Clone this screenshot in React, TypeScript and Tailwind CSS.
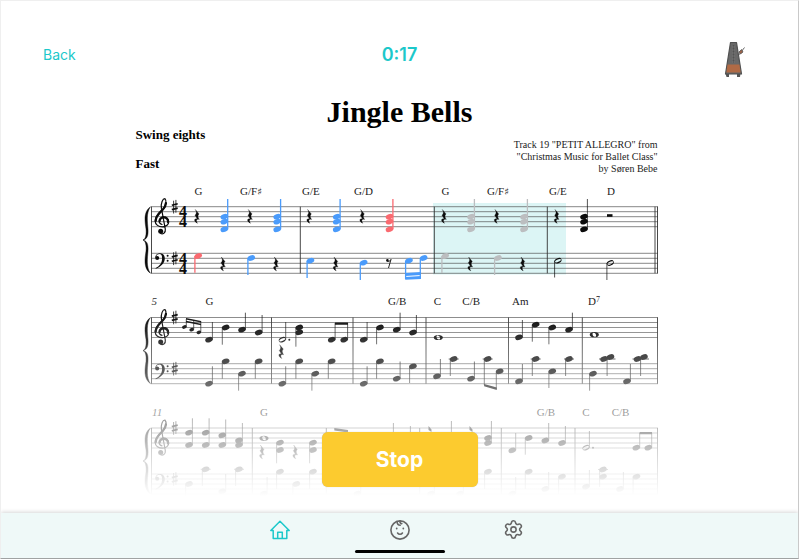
import { useState } from "react";
import { Settings } from "lucide-react";

const INK = "#0b0b0b";
const BLUE = "#4a9bfb";
const RED = "#fa6a70";
const MUTED = "#bcbec0";

type Note = {
  x: number;
  y: number[];
  to?: number;
  dir?: "up" | "down";
  color?: string;
  kind?: "half" | "whole" | "grace";
  dot?: boolean;
  ledger?: boolean;
};

function Head({ x, y, color, kind }: { x: number; y: number; color: string; kind?: Note["kind"] }) {
  if (kind === "whole") {
    return (
      <g transform={`translate(${x} ${y})`}>
        <path
          fillRule="evenodd"
          fill={color}
          d="M-4.600 0C-4.600-1.700-2.600-2.600 0-2.600S4.600-1.700 4.600 0 2.600 2.600 0 2.600-4.600 1.700-4.600 0ZM-1.800-.7C-1.800.8-.7 2 .5 2 1.500 2 1.800 1.400 1.800.7 1.800-.8.7-2-.5-2-1.500-2-1.800-1.400-1.800-.7Z"
        />
      </g>
    );
  }
  if (kind === "half") {
    return (
      <g transform={`translate(${x} ${y}) rotate(-24)`}>
        <path
          fillRule="evenodd"
          fill={color}
          d="M-3.700 0A3.700 2.500 0 1 0 3.700 0 3.700 2.500 0 1 0-3.700 0ZM-3.100.2A3.100 1.200 0 1 0 3.100-.2 3.100 1.200 0 1 0-3.100.2Z"
        />
      </g>
    );
  }
  const r = kind === "grace" ? [2.4, 1.7] : [3.9, 2.6];
  return <ellipse cx={x} cy={y} rx={r[0]} ry={r[1]} fill={color} transform={`rotate(-20 ${x} ${y})`} />;
}

function Notes({ items }: { items: Note[] }) {
  return (
    <>
      {items.map((n, i) => {
        const color = n.color ?? INK;
        const reach = n.kind === "grace" ? 2 : 3.4;
        const sx = n.dir === "down" ? n.x - reach : n.x + reach;
        const from = n.dir === "down" ? Math.min(...n.y) : Math.max(...n.y);
        return (
          <g key={i}>
            {n.to !== undefined && (
              <line x1={sx} x2={sx} y1={from} y2={n.to} stroke={color} strokeWidth={n.color ? 1.3 : 0.7} />
            )}
            {n.ledger && <line x1={n.x - 5} x2={n.x + 5} y1={n.y[0]} y2={n.y[0]} stroke={color} strokeWidth=".8" />}
            {n.y.map((y) => (
              <Head key={y} x={n.x} y={y} color={color} kind={n.kind} />
            ))}
            {n.dot && <circle cx={n.x + 7} cy={n.y[0]} r="1" fill={color} />}
          </g>
        );
      })}
    </>
  );
}

function Rest({ x, y }: { x: number; y: number }) {
  return (
    <path
      transform={`translate(${x} ${y})`}
      fill={INK}
      stroke={INK}
      strokeWidth=".3"
      d="M-1.700-7 2-2.600C.4-1 .8.600 2.300 3-.400 2.200-1.400 4 .500 6.800-3.300 4.800-3.300 1.600.200 2.200L-2-1.200C-.200-3-.300-4.800-1.700-7Z"
    />
  );
}

function Sharp({ x, y }: { x: number; y: number }) {
  return (
    <g transform={`translate(${x} ${y})`} stroke={INK}>
      <path strokeWidth=".8" d="M-1.100-6V6.800M1.200-6.800V6" />
      <path strokeWidth="1.700" d="M-2.900-1.400 3-2.900M-2.900 2.900 3 1.400" />
    </g>
  );
}

function TrebleClef({ y }: { y: number }) {
  return (
    <g transform={`translate(161.700 ${y})`} fill="none" stroke={INK} strokeLinecap="round">
      <path
        strokeWidth="1.200"
        d="M3.600 7.500-.300-13.500C-1-18.500 1-23 3.200-23 5.200-21 4.500-16 1.500-12.500-2-8.500-6.500-6-6.500-.5-6.500 3-3 5.200.8 5.200 4.600 5.200 7 2.600 7 0 7-3 4.500-4.800 2-4.800-.6-4.800-2.600-2.800-2.600-.6-2.600 1-1.400 2.400.3 2.800M3.600 7.500C4.200 11.600.8 12.600-1 11.800"
      />
      <path strokeWidth="2.300" d="M4.200-18.500C4-15.500 2.600-13.600 1-12-2.500-8.600-6-5.600-6-.8" />
      <path strokeWidth="2.200" d="M6.400.6C6.400-2.600 4.400-4.200 2-4.200-.2-4.200-2-2.600-2-.6" />
      <circle cx="-1" cy="9.600" r="2.500" fill={INK} stroke="none" />
    </g>
  );
}

function BassClef({ y }: { y: number }) {
  return (
    <g transform={`translate(155 ${y})`} fill={INK}>
      <path d="M.3-.4C.3-3.200 2.200-5 5-5 8-5 9.800-2.900 9.800.2 9.800 5 6 8.200.8 10.500L.5 9.900C4.600 7.800 7.100 4.600 7.100.2 7.100-2.600 6.500-4.300 4.500-4.300 2.700-4.300 1.300-3.200 1.200-1.400Z" />
      <circle cx="2.200" cy="-.3" r="2" />
      <circle cx="12.600" cy="-2.500" r="1" />
      <circle cx="12.600" cy="2.500" r="1" />
    </g>
  );
}

function Staves({ treble, bass, bars }: { treble: number; bass: number; bars: number[] }) {
  const bottom = bass + 20;
  const mid = (treble + bottom) / 2;
  return (
    <g>
      {[treble, bass].map((top) =>
        [0, 5, 10, 15, 20].map((d) => (
          <line key={top + d} x1="151" x2="658" y1={top + d} y2={top + d} stroke="#555" strokeWidth=".7" />
        )),
      )}
      {[151.5, ...bars, 657.5].map((x) => (
        <line key={x} x1={x} x2={x} y1={treble} y2={bottom} stroke="#333" strokeWidth=".9" />
      ))}
      <path
        fill={INK}
        stroke={INK}
        strokeWidth=".4"
        d={`M150.500 ${treble}C143 ${treble + 5} 145 ${mid - 18} 146 ${mid - 11}C146.500 ${mid - 5} 145.500 ${mid - 1} 143 ${mid}C145.500 ${mid + 1} 146.500 ${mid + 5} 146 ${mid + 11}C145 ${mid + 18} 143 ${bottom - 5} 150.500 ${bottom}C146 ${bottom - 6} 147.500 ${mid + 18} 148 ${mid + 11}C148.500 ${mid + 4} 147 ${mid + 1} 143 ${mid}C147 ${mid - 1} 148.500 ${mid - 4} 148 ${mid - 11}C147.500 ${mid - 18} 146 ${treble + 6} 150.500 ${treble}Z`}
      />
      <TrebleClef y={treble + 15} />
      <BassClef y={bass + 5} />
      <Sharp x={174.7} y={treble} />
      <Sharp x={174.7} y={bass + 5} />
    </g>
  );
}

type Chord = { x: number; name: string; sharp?: boolean; sup?: string };

function Chords({ y, items }: { y: number; items: Chord[] }) {
  return (
    <g fill="#1c1c1c">
      {items.map((c) => (
        <text key={c.x} x={c.x} y={y} className="font-['Liberation_Serif',serif] text-[11px]">
          {c.name}
          {c.sharp && <tspan className="font-['DejaVu_Sans',sans-serif] text-[10px] font-bold">♯</tspan>}
          {c.sup && (
            <tspan dy="-3" className="text-[8px]">
              {c.sup}
            </tspan>
          )}
        </text>
      ))}
    </g>
  );
}

const up = (x: number, y: number | number[], to: number, extra: Partial<Note> = {}): Note => ({
  x,
  y: Array.isArray(y) ? y : [y],
  to,
  dir: "up",
  ...extra,
});
const down = (x: number, y: number | number[], to: number, extra: Partial<Note> = {}): Note => ({
  x,
  y: Array.isArray(y) ? y : [y],
  to,
  dir: "down",
  ...extra,
});

const triad = (x: number, color?: string) => up(x, [216.7, 221.7, 229.3], 199, { color });

function SystemOne() {
  return (
    <svg viewBox="136 180 528 112" className="block w-full" role="img" aria-label="Bars 1 to 4">
      <rect x="433" y="203" width="133" height="71.500" fill="#dcf5f5" />
      <Staves treble={206.7} bass={253.3} bars={[300.3, 434.3, 547.3, 655]} />
      <Chords
        y={195}
        items={[
          { x: 194.5, name: "G" },
          { x: 240, name: "G/F", sharp: true },
          { x: 302, name: "G/E" },
          { x: 354, name: "G/D" },
          { x: 441.5, name: "G" },
          { x: 487, name: "G/F", sharp: true },
          { x: 549, name: "G/E" },
          { x: 607, name: "D" },
        ]}
      />
      <text fill={INK} textAnchor="middle" className="font-['Liberation_Serif',serif] text-[16px] font-bold">
        {[217, 227, 263.6, 273.6].map((y) => (
          <tspan key={y} x="183" y={y}>
            4
          </tspan>
        ))}
      </text>
      {[197, 250, 309.3, 362.3, 444, 496.7, 556.7].map((x) => (
        <Rest key={x} x={x} y={216.5} />
      ))}
      {[223, 276, 335.7, 470.3, 522.7].map((x) => (
        <Rest key={x} x={x} y={264} />
      ))}
      <rect x="607" y="214.200" width="5.500" height="2.600" fill={INK} />
      <g transform="translate(388.700 263)">
        <circle cx="-1.300" cy="-2.600" r="1.300" fill={INK} />
        <path d="M-1.300-1.600C0-1.200 1.400-2 2.300-3.600L-.2 5" fill="none" stroke={INK} strokeWidth=".9" />
      </g>
      <Notes
        items={[
          triad(224.3, BLUE),
          triad(277.2, BLUE),
          triad(336.7, BLUE),
          triad(389.5, RED),
          triad(471, MUTED),
          triad(524, MUTED),
          triad(584),
          down(198.3, 256, 272.7, { color: RED }),
          down(251.3, 258, 275, { color: BLUE }),
          down(310.5, 260.7, 278, { color: BLUE }),
          down(363.7, 262.7, 280, { color: BLUE }),
          down(409, 260.7, 279, { color: BLUE }),
          down(423.7, 258, 278, { color: BLUE }),
          down(445.3, 256, 273, { color: MUTED }),
          down(498, 258, 275, { color: MUTED }),
          down(558, 260.7, 277.5, { kind: "half" }),
          down(610.3, 263, 280, { kind: "half" }),
        ]}
      />
      <path fill={BLUE} d="M405.200 273 421 272V275L405.200 276ZM405.200 277 421 276V278.900L405.200 279.800Z" />
    </svg>
  );
}

function SystemTwo() {
  return (
    <svg viewBox="136 292 528 110" className="block w-full" role="img" aria-label="Bars 5 to 10">
      <Staves treble={317.5} bass={363.7} bars={[271.5, 353, 426, 508.5, 582.3]} />
      <Chords
        y={305}
        items={[
          { x: 205.5, name: "G" },
          { x: 388, name: "G/B" },
          { x: 433.7, name: "C" },
          { x: 462.3, name: "C/B" },
          { x: 512, name: "Am" },
          { x: 588, name: "D", sup: "7" },
        ]}
      />
      <text x="151.500" y="305" fill="#333" className="font-['Liberation_Serif',serif] text-[11px] italic">
        5
      </text>
      <Rest x={281.3} y={351.7} />
      <path
        fill={INK}
        d="M186 318 201 321V322.600L186 319.600ZM186 320.800 201 323.800V325.200L186 322.200ZM335 322.400H348V324.800H335ZM484.100 384 496.800 387.500V390L484.100 386.300Z"
      />
      <Notes
        items={[
          up(184.3, 327, 319, { kind: "grace" }),
          up(191.7, 329.7, 320, { kind: "grace" }),
          up(198.8, 332.3, 321, { kind: "grace" }),
          up(209, 339.7, 322),
          down(225.7, 327.5, 344.7),
          up(242, 329.7, 312.7),
          up(258.7, 332.5, 315),
          up(282.3, 339.7, 322, { kind: "half", dot: true }),
          down(299.3, [327.5, 332.3], 346.7),
          up(331.7, 339.7, 323),
          up(344.2, 339.7, 323),
          up(363.7, 339.7, 322),
          down(380, 327.5, 344.3),
          up(396.7, 329.7, 312.7),
          up(413, 332.5, 315),
          { x: 438.3, y: [337.5], kind: "whole" },
          up(519, 337.3, 320),
          down(535.7, 324.7, 341.7),
          down(552.3, 327.5, 344.3),
          up(569, 329.7, 312.7),
          { x: 594.3, y: [334.7], kind: "whole" },
          up(209, 383.7, 366.3),
          down(225.7, 361.3, 378.7),
          down(242, 373.7, 390.7),
          down(258.7, 361.3, 378.7),
          up(282.3, 383.7, 366.3),
          down(299.3, 361.3, 378.7),
          down(315.3, 373.7, 390.7),
          down(331.7, 361.3, 378.7),
          up(363.7, 383.7, 366.3),
          down(380, 361.3, 378.7),
          up(396.7, 378.7, 361.5),
          down(413, 366.3, 383),
          up(437, 376.3, 359),
          down(453.7, 359, 376, { ledger: true }),
          up(471, 378.7, 361.5),
          down(487.7, 359, 385, { ledger: true }),
          down(499.7, 371.3, 389),
          up(519, 381.3, 364),
          down(535.7, 359, 376, { ledger: true }),
          down(552.3, 371.3, 388),
          down(569, 359, 376, { ledger: true }),
          down(593, 373.7, 390.7),
          down(610.5, 357, 376),
          { x: 604, y: [359], ledger: true },
          up(627, 381.3, 364),
          down(644, 357, 376),
          { x: 637.5, y: [359], ledger: true },
        ]}
      />
      <path stroke={INK} strokeWidth=".8" d="M609 359H615.500M642 359H649" />
    </svg>
  );
}

function SystemThree() {
  return (
    <svg viewBox="136 402 528 100" className="block w-full" role="img" aria-label="Bars 11 to 16">
      <Staves treble={428} bass={474} bars={[252.3, 326.3, 419.7, 501.3, 575]} />
      <Chords
        y={415.7}
        items={[
          { x: 260, name: "G" },
          { x: 536.7, name: "G/B" },
          { x: 582.3, name: "C" },
          { x: 611.7, name: "C/B" },
        ]}
      />
      <text x="152" y="415.700" fill="#333" className="font-['Liberation_Serif',serif] text-[11px] italic">
        11
      </text>
      <Rest x={262} y={452} />
      <Rest x={295.3} y={452} />
      <path
        fill={INK}
        d="M334.300 428 348 430V432.500L334.300 430.500ZM639.600 432H652V434.200H639.600ZM428.500 426 431.500 429.500V432L428.500 430ZM469.500 426 472.500 429.500V432L469.500 430Z"
      />
      <Notes
        items={[
          up(189, [432.7, 445], 418.3),
          up(205.7, [432.7, 445], 418.3),
          up(222.3, [435.3, 445], 419.5),
          up(239, [440.3, 445], 423),
          { x: 264, y: [438.3], kind: "whole" },
          down(280, [442.7, 450], 463.3),
          down(313, [442.7, 450], 463.3),
          up(390, 440, 423),
          up(407, 443, 426),
          up(448, 440, 421),
          up(488, [438, 443], 421),
          up(512.3, 450.3, 433),
          down(528.7, 438, 454.7),
          up(545.3, 440.5, 423),
          up(562, 443, 426),
          up(586, 447.7, 431, { kind: "half", dot: true }),
          up(636.3, 447.7, 433),
          up(648.3, 447.7, 433),
          down(189, 484, 501),
          down(205.7, 469.3, 486, { ledger: true }),
          up(222.3, 491.3, 474),
          down(239, 469.3, 486, { ledger: true }),
          up(263.7, 493.7, 477),
          down(280, 471.7, 489),
          down(296.3, 484, 501),
          down(313, 471.7, 489),
          up(357.3, 493.7, 477),
          up(431, 493.7, 477),
          up(460, 493.7, 477),
          down(488, 471.7, 489),
          up(512.3, 493.7, 477),
          down(528.7, 471.7, 489),
          up(545.3, 489, 472),
          down(562, 476.7, 494),
          up(586, 486.7, 470),
          down(603, [469.5, 476.7], 487, { ledger: true }),
          up(620, 489, 472),
          down(636.5, 476.7, 494),
        ]}
      />
    </svg>
  );
}

function Metronome() {
  return (
    <svg viewBox="0 0 50 50" className="size-[50px]" aria-hidden="true">
      <path d="M32 26 38.500 17.500" stroke="#666" strokeWidth="1" />
      <path d="M33 22 35.500 19.500 37 22 34.500 24Z" fill="#9a6248" stroke="#555" strokeWidth=".8" />
      <path d="M19.500 43.500H23V47H20.500ZM31 43.500H34.500L34 47H31Z" fill="#555" />
      <path d="M24.500 12.500H30.500L35.500 44H19.500Z" fill="#686868" stroke="#505050" strokeWidth="1.200" strokeLinejoin="round" />
      <path d="M21.500 34.500H33.500L34.600 42.500H20.400Z" fill="#b06a45" />
      <path d="M27.500 15V33" stroke="#525252" strokeWidth="1.200" />
      <path d="M26 17H29M26 20H29M26 23H29M26 26H29M26 29H29M26 32H29" stroke="#858585" strokeWidth=".5" />
    </svg>
  );
}

function HomeIcon() {
  return (
    <svg viewBox="0 0 20 20" className="size-5" fill="none" stroke="currentColor" strokeWidth="1.500" strokeLinejoin="round" strokeLinecap="round" aria-hidden="true">
      <path d="M3.200 10.500H.8L10 1.200 19.200 10.500H16.800V18.500H3.200ZM7.700 18.500V12.300H12.300V18.500" />
    </svg>
  );
}

function BabyIcon() {
  return (
    <svg viewBox="0 0 20 20" className="size-5" fill="none" stroke="currentColor" strokeWidth="1.600" strokeLinecap="round" aria-hidden="true">
      <circle cx="10" cy="10" r="9.100" />
      <path d="M7 1.500C7.200 4 8.200 5.300 10.200 5.300M10 1C9.800 2.800 10.600 3.700 11.800 3.600M7.600 13C8.700 14.700 11.300 14.700 12.400 13" />
      <path strokeWidth="1.800" d="M6.700 8.500V8.600M13.300 8.500V8.600" />
    </svg>
  );
}

export default function App() {
  const [playing, setPlaying] = useState(true);
  return (
    <div className="h-screen min-h-[560px] bg-white pr-px pb-px">
      <div className="flex h-full flex-col overflow-hidden border border-t-[#efefef] border-r-[#c9c9c9] border-b-[#a0a3a3] border-l-[#efefef] font-[Inter,sans-serif]">
        <header className="grid grid-cols-3 items-center px-[42px] pt-[29px] pb-4 text-[#1cc8ca]">
          <button type="button" className="justify-self-start text-sm">
            Back
          </button>
          <time className="justify-self-center text-lg font-semibold">0:17</time>
          <button type="button" aria-label="Metronome" className="justify-self-end">
            <Metronome />
          </button>
        </header>

        <main className="relative min-h-0 flex-1 overflow-hidden">
          <article className="mx-auto w-full max-w-[528px] font-['Liberation_Serif',serif] text-black">
            <h1 className="text-center text-[30px] leading-8 font-bold">Jingle Bells</h1>
            <div className="flex justify-between pr-1.5">
              <div className="flex flex-col gap-[15px] text-[13px] leading-[14px] font-bold">
                <p>Swing eights</p>
                <p>Fast</p>
              </div>
              <p className="pt-[11px] text-right text-[10px] leading-3 text-[#222]">
                Track 19 "PETIT ALLEGRO" from
                <br />
                "Christmas Music for Ballet Class"
                <br />
                by Søren Bebe
              </p>
            </div>
            <div className="relative pt-[5px]">
              <SystemOne />
              <SystemTwo />
              <SystemThree />
              <div className="pointer-events-none absolute inset-x-0 bottom-0 h-[192px] bg-linear-to-b from-white/0 to-white to-97%" />
            </div>
          </article>
          <button
            type="button"
            onClick={() => setPlaying(!playing)}
            className="absolute bottom-[26px] left-1/2 h-[55px] w-[156px] -translate-x-1/2 rounded-md bg-[#fccb2f] text-[21px] font-bold text-white shadow-[0_0_1px_#b5b5b5]"
          >
            {playing ? "Stop" : "Play"}
          </button>
        </main>

        <footer className="relative flex flex-col items-center gap-[10px] bg-[#eff9f8] pt-1.5 pb-[5px] shadow-[0_-1px_4px_rgba(0,0,0,0.16)]">
          <nav className="grid w-full max-w-[260px] grid-cols-[1fr_auto_1fr] items-center text-[#666]">
            <button type="button" aria-label="Home" className="justify-self-start text-[#1cc8ca]">
              <HomeIcon />
            </button>
            <button type="button" aria-label="Baby classes">
              <BabyIcon />
            </button>
            <button type="button" aria-label="Settings" className="justify-self-end pr-1.5">
              <Settings className="size-[21px]" strokeWidth={1.8} />
            </button>
          </nav>
          <div className="h-[3px] w-[90px] rounded-full bg-black" />
        </footer>
      </div>
    </div>
  );
}
